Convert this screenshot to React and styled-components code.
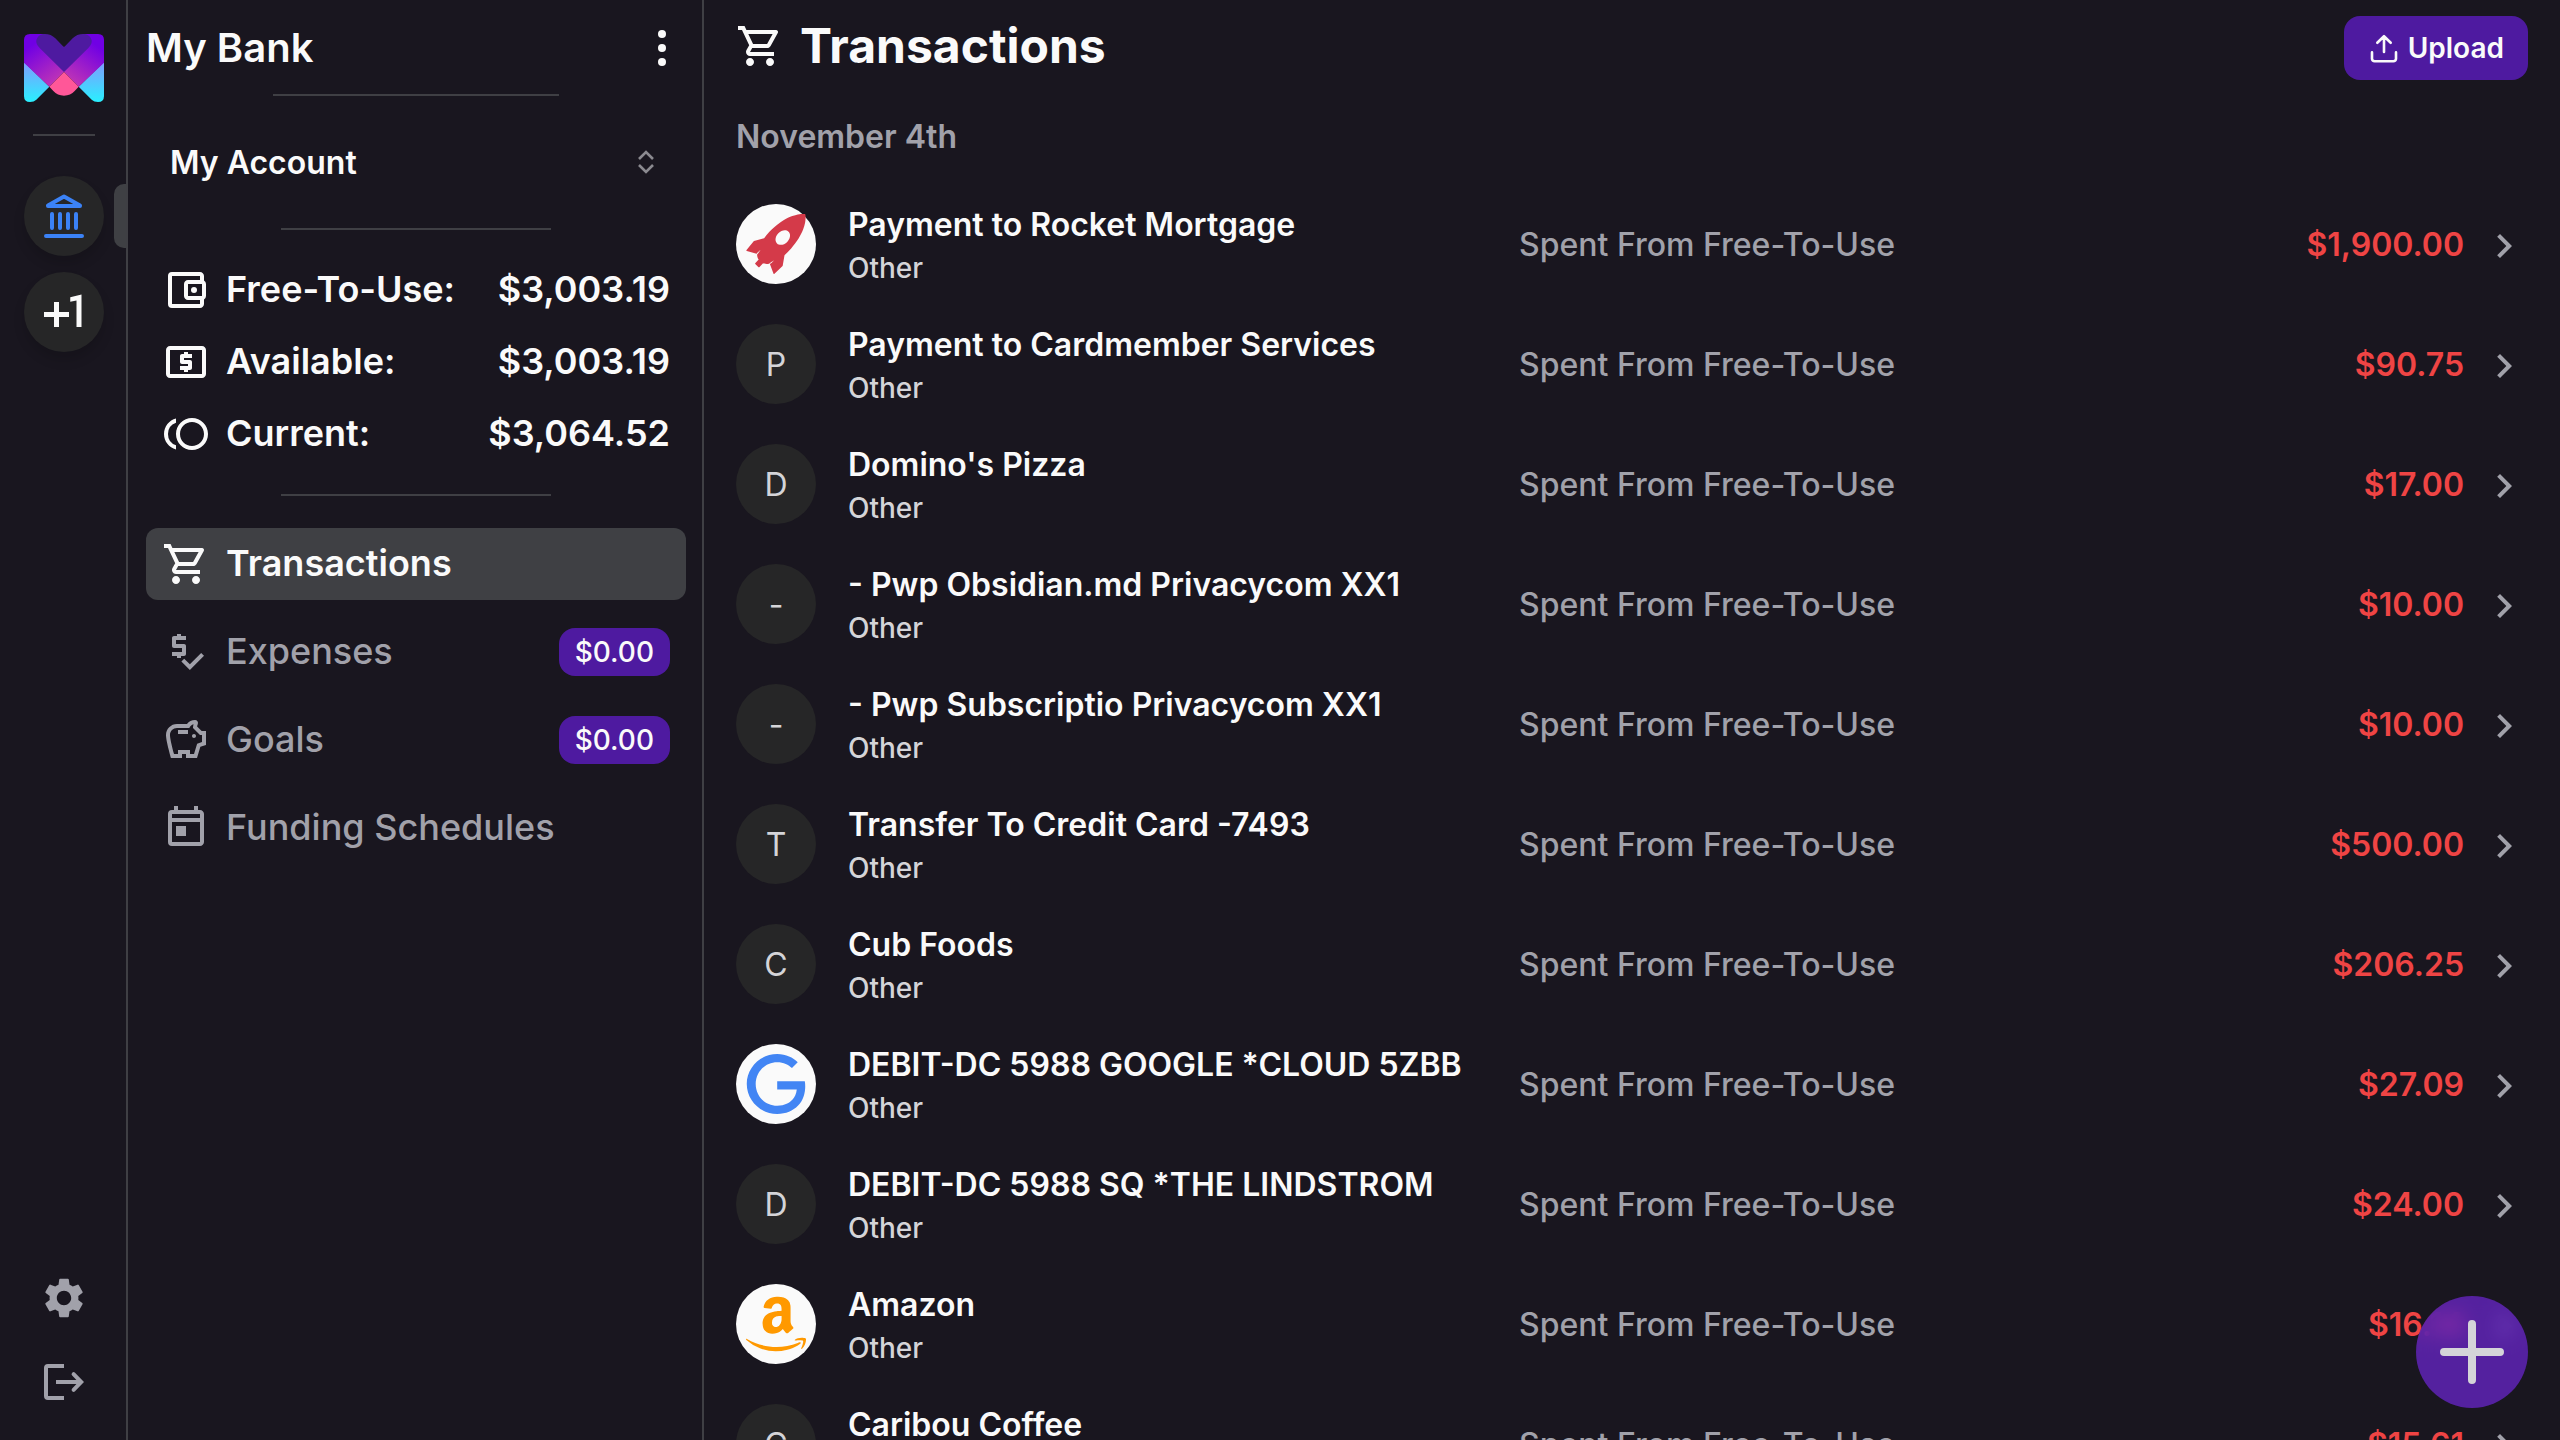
import React from "react";
import styled, { createGlobalStyle, css } from "styled-components";
import {
  MdKeyboardArrowRight,
  MdOutlineAccountBalanceWallet,
  MdOutlineLocalAtm,
  MdOutlineSavings,
  MdOutlineShoppingCart,
  MdOutlineToday,
  MdOutlineToll,
  MdPlusOne,
  MdPriceCheck,
  MdSettings,
} from "react-icons/md";
import { SiAmazon, SiGoogle, SiRocket } from "react-icons/si";

const color = {
  background: "#19161f",
  border: "#3f3f44",
  selected: "#3f4044",
  subtle: "#262627",
  purple: "#4e1aa0",
  bright: "#fafafa",
  content: "#d4d4d8",
  muted: "#a1a1aa",
  blue: "#3b82f6",
  red: "#ef4444",
};

const GlobalStyle = createGlobalStyle`
  *, *::before, *::after { box-sizing: border-box; }
  body {
    margin: 0;
    background: ${color.background};
    color: ${color.bright};
    font-family: Inter, "Liberation Sans", sans-serif;
  }
  button, select { font: inherit; color: inherit; border: 0; background: none; padding: 0; cursor: pointer; }
  a { color: inherit; text-decoration: none; }
  h1, h2, p, ul, dl, dd { margin: 0; padding: 0; }
  ul { list-style: none; }
  svg { display: block; flex: none; }
`;

const Layout = styled.div`
  display: flex;
  height: 100vh;
  overflow: hidden;
`;

/* Bank rail */

const Rail = styled.nav`
  flex: none;
  display: flex;
  flex-direction: column;
  align-items: center;
  width: 128px;
  padding: 34px 0 34px 2px;
  border-right: 2px solid ${color.border};
`;

const RailDivider = styled.hr`
  width: 62px;
  height: 2px;
  margin: 32px 0 40px;
  border: 0;
  background: ${color.border};
`;

const RailList = styled.ul`
  display: flex;
  flex-direction: column;
  gap: 16px;
  width: 100%;
  flex: 1;
`;

const RailItem = styled.li`
  position: relative;
  display: flex;
  justify-content: center;
  ${(p) =>
    p.$active &&
    css`
      &::after {
        content: "";
        position: absolute;
        right: 0;
        top: 8px;
        width: 12px;
        height: 64px;
        border-radius: 10px 0 0 10px;
        background: ${color.selected};
      }
    `}
`;

const RailButton = styled.button`
  display: grid;
  place-items: center;
  width: 80px;
  height: 80px;
  border-radius: 50%;
  background: ${color.subtle};
  box-shadow: 0 8px 12px rgba(0, 0, 0, 0.14);
`;

const RailFooter = styled.div`
  display: flex;
  flex-direction: column;
  gap: 36px;
  color: ${color.muted};
`;

/* Budgeting sidebar */

const Sidebar = styled.aside`
  flex: none;
  display: flex;
  flex-direction: column;
  align-items: stretch;
  width: 576px;
  padding: 0 16px 0 18px;
  border-right: 2px solid ${color.border};
`;

const SidebarHeader = styled.header`
  display: flex;
  align-items: center;
  justify-content: space-between;
  height: 94px;
  padding-top: 2px;
`;

const BankName = styled.h2`
  font-size: 40px;
  line-height: 48px;
  font-weight: 600;
`;

const MenuButton = styled.button`
  display: grid;
  place-items: center;
  width: 48px;
  height: 48px;
`;

const Divider = styled.hr`
  width: ${(p) => (p.$wide ? 286 : 270)}px;
  height: 2px;
  margin: 0 auto;
  border: 0;
  background: ${color.border};
`;

const AccountField = styled.div`
  display: grid;
  align-items: center;
  height: 132px;
  > * {
    grid-area: 1 / 1;
  }
  > svg {
    justify-self: end;
    margin-right: 32px;
    pointer-events: none;
  }
`;

const AccountSelect = styled.select`
  appearance: none;
  height: 72px;
  padding: 0 64px 0 24px;
  font-size: 32px;
  font-weight: 600;
`;

const Balances = styled.dl`
  padding: 24px 0;
`;

const Balance = styled.div`
  display: flex;
  align-items: center;
  gap: 16px;
  height: 72px;
  padding: 0 16px;
  font-size: 36px;
  line-height: 48px;
  font-weight: 600;
  dt,
  dd {
    padding-bottom: 2px;
  }
  dd {
    margin-left: auto;
  }
`;

const Menu = styled.ul`
  display: flex;
  flex-direction: column;
  gap: 16px;
  padding-top: 32px;
`;

const MenuLink = styled.a`
  display: flex;
  align-items: center;
  gap: 16px;
  height: 72px;
  padding: 0 16px;
  border-radius: 12px;
  font-size: 36px;
  line-height: 48px;
  font-weight: ${(p) => (p.$active ? 600 : 500)};
  color: ${(p) => (p.$active ? color.bright : color.muted)};
  background: ${(p) => (p.$active ? color.selected : "transparent")};
`;

const MenuLabel = styled.span`
  padding-bottom: 2px;
`;

const Badge = styled.span`
  margin-left: auto;
  padding: 0 16px;
  border-radius: 16px;
  background: ${color.purple};
  color: ${color.bright};
  font-size: 28px;
  line-height: 48px;
  font-weight: 500;
`;

/* Transactions */

const Main = styled.main`
  position: relative;
  flex: 1;
  min-width: 0;
  display: flex;
  flex-direction: column;
`;

const PageHeader = styled.header`
  flex: none;
  display: flex;
  align-items: center;
  justify-content: space-between;
  height: 96px;
  padding: 0 32px;
`;

const PageTitle = styled.h1`
  display: flex;
  align-items: center;
  gap: 16px;
  padding-bottom: 4px;
  font-size: 48px;
  line-height: 64px;
  font-weight: 700;
`;

const UploadButton = styled.button`
  display: flex;
  align-items: center;
  gap: 8px;
  height: 64px;
  padding: 0 24px;
  border-radius: 16px;
  background: ${color.purple};
  font-size: 28px;
  font-weight: 600;
`;

const Feed = styled.section`
  flex: 1;
  min-height: 0;
  padding: 0 32px;
  overflow-y: auto;
  scrollbar-width: none;
`;

const DateHeading = styled.h2`
  height: 88px;
  padding-top: 17px;
  font-size: 32px;
  line-height: 48px;
  font-weight: 600;
  color: ${color.muted};
`;

const TransactionLink = styled.a`
  display: grid;
  grid-template-columns: 1fr 1fr 162px 64px;
  align-items: center;
  height: 120px;
`;

const Merchant = styled.div`
  display: flex;
  align-items: center;
  gap: 32px;
  min-width: 0;
`;

const Avatar = styled.span`
  flex: none;
  display: grid;
  place-items: center;
  width: 80px;
  height: 80px;
  border-radius: 50%;
  font-size: 32px;
  color: ${(p) => p.$tint || color.content};
  background: ${(p) => (p.$tint ? color.bright : color.subtle)};
`;

const MerchantText = styled.div`
  padding-top: 2px;
`;

const MerchantName = styled.p`
  font-size: 32px;
  line-height: 46px;
  font-weight: 600;
  white-space: nowrap;
`;

const Category = styled.p`
  font-size: 28px;
  line-height: 40px;
  font-weight: 500;
  color: ${color.content};
`;

const SpentFrom = styled.span`
  padding-top: 2px;
  font-size: 32px;
  line-height: 48px;
  font-weight: 500;
  color: ${color.muted};
`;

const Amount = styled.span`
  justify-self: end;
  padding-top: 2px;
  font-size: 32px;
  line-height: 48px;
  font-weight: 600;
  color: ${color.red};
`;

const Chevron = styled(MdKeyboardArrowRight)`
  justify-self: end;
  margin-top: 4px;
  color: ${color.muted};
`;

const AddButton = styled.button`
  position: absolute;
  right: 32px;
  bottom: 32px;
  display: grid;
  place-items: center;
  width: 112px;
  height: 112px;
  border-radius: 50%;
  background: rgba(116, 40, 229, 0.65);
  backdrop-filter: blur(10px);
  color: ${color.content};
`;

/* Drawings */

const Logo = () => (
  <svg width="80" height="68" viewBox="0 0 240 204" role="img" aria-label="monetr">
    <defs>
      <linearGradient id="ribbonL" gradientUnits="userSpaceOnUse" x1="20" y1="15" x2="118" y2="150">
        <stop offset="0.1" stopColor="#7000e4" />
        <stop offset="1" stopColor="#c93bb0" />
      </linearGradient>
      <linearGradient id="ribbonR" gradientUnits="userSpaceOnUse" x1="220" y1="15" x2="122" y2="150">
        <stop offset="0.1" stopColor="#7000e4" />
        <stop offset="1" stopColor="#c93bb0" />
      </linearGradient>
      <linearGradient id="leg" gradientUnits="userSpaceOnUse" x1="0" y1="86" x2="0" y2="204">
        <stop offset="0" stopColor="#7f9cff" />
        <stop offset="1" stopColor="#29f0ff" />
      </linearGradient>
    </defs>
    <path fill="url(#leg)" d="M0 84 76 158 37 197Q30 204 18 204Q0 204 0 186Z" />
    <path fill="url(#leg)" d="M240 84 164 158 203 197Q210 204 222 204Q240 204 240 186Z" />
    <path fill="url(#ribbonL)" d="M18 0H62L120 40V114L76 158 0 86V18Q0 0 18 0Z" />
    <path fill="url(#ribbonR)" d="M222 0H178L120 40V114L164 158 240 86V18Q240 0 222 0Z" />
    <path
      fill="#4e1aa0"
      d="M120 114 47 42C38 33 36 26 37 19C40 7 49 0 62 0C76 0 85 4 94 13L120 40 146 13C155 4 164 0 178 0C191 0 200 7 203 19C204 26 202 33 193 42Z"
    />
    <path fill="#ff5798" d="M120 114 164 158 152 171C144 180 133 185 120 185C107 185 96 180 88 171L76 158Z" />
  </svg>
);

const BankIcon = () => (
  <svg width="48" height="48" viewBox="0 0 48 48" fill="none" stroke={color.blue} strokeWidth="4" strokeLinecap="round">
    <path strokeLinejoin="round" d="M24 4.5 40 13.5V14H8V13.5Z" />
    <path d="M12 22v14M20 22v14M28 22v14M36 22v14M6 44h36" />
  </svg>
);

const LogoutIcon = () => (
  <svg width="48" height="48" viewBox="0 0 24 24" fill="none" stroke="currentColor" strokeWidth="2">
    <path d="M12 4H4a1 1 0 0 0-1 1v14a1 1 0 0 0 1 1h8M8 12h12.5" />
    <path strokeLinecap="round" d="M16.8 8.1 20.6 12l-3.8 3.9" />
  </svg>
);

const MoreIcon = () => (
  <svg width="8" height="36" viewBox="0 0 8 36" fill="currentColor">
    <circle cx="4" cy="4" r="4" />
    <circle cx="4" cy="18" r="4" />
    <circle cx="4" cy="32" r="4" />
  </svg>
);

const SelectIcon = () => (
  <svg width="16" height="24" viewBox="0 0 16 24" fill="none" stroke="#8b8a90" strokeWidth="2.6">
    <path d="M1 9 8 2l7 7M1 15l7 7 7-7" />
  </svg>
);

const UploadIcon = () => (
  <svg
    width="32"
    height="32"
    viewBox="0 0 32 32"
    fill="none"
    stroke="currentColor"
    strokeWidth="2.6"
    strokeLinecap="round"
    strokeLinejoin="round"
  >
    <path d="M16 20V4.4M9.3 10.8 16 4.2l6.7 6.6M4 20.4v6.3a2.6 2.6 0 0 0 2.6 2.6h18.8a2.6 2.6 0 0 0 2.6-2.6v-6.3" />
  </svg>
);

const PlusIcon = () => (
  <svg width="64" height="64" viewBox="0 0 64 64" stroke="currentColor" strokeWidth="8" strokeLinecap="round">
    <path d="M32 4v56M4 32h56" />
  </svg>
);

/* Data */

const balances = [
  { label: "Free-To-Use:", value: "$3,003.19", icon: MdOutlineAccountBalanceWallet },
  { label: "Available:", value: "$3,003.19", icon: MdOutlineLocalAtm },
  { label: "Current:", value: "$3,064.52", icon: MdOutlineToll },
];

const menu = [
  { label: "Transactions", icon: MdOutlineShoppingCart, active: true },
  { label: "Expenses", icon: MdPriceCheck, badge: "$0.00" },
  { label: "Goals", icon: MdOutlineSavings, badge: "$0.00" },
  { label: "Funding Schedules", icon: MdOutlineToday },
];

const transactions = [
  { name: "Payment to Rocket Mortgage", amount: "$1,900.00", logo: SiRocket, tint: "#d43a49" },
  { name: "Payment to Cardmember Services", amount: "$90.75" },
  { name: "Domino's Pizza", amount: "$17.00" },
  { name: "- Pwp Obsidian.md Privacycom XX1", amount: "$10.00" },
  { name: "- Pwp Subscriptio Privacycom XX1", amount: "$10.00" },
  { name: "Transfer To Credit Card -7493", amount: "$500.00" },
  { name: "Cub Foods", amount: "$206.25" },
  { name: "DEBIT-DC 5988 GOOGLE *CLOUD 5ZBB", amount: "$27.09", logo: SiGoogle, tint: "#4285f4" },
  { name: "DEBIT-DC 5988 SQ *THE LINDSTROM", amount: "$24.00" },
  { name: "Amazon", amount: "$16.14", logo: SiAmazon, tint: "#ff9900" },
  { name: "Caribou Coffee", amount: "$15.61" },
];

function Transaction({ name, amount, logo: BrandLogo, tint }) {
  return (
    <li>
      <TransactionLink href="#">
        <Merchant>
          <Avatar $tint={tint}>{BrandLogo ? <BrandLogo size={60} /> : name[0]}</Avatar>
          <MerchantText>
            <MerchantName>{name}</MerchantName>
            <Category>Other</Category>
          </MerchantText>
        </Merchant>
        <SpentFrom>Spent From Free-To-Use</SpentFrom>
        <Amount>{amount}</Amount>
        <Chevron size={48} />
      </TransactionLink>
    </li>
  );
}

export default function App() {
  return (
    <>
      <GlobalStyle />
      <Layout>
        <Rail aria-label="Banks">
          <Logo />
          <RailDivider />
          <RailList>
            <RailItem $active>
              <RailButton aria-label="My Bank">
                <BankIcon />
              </RailButton>
            </RailItem>
            <RailItem>
              <RailButton aria-label="Add a bank">
                <MdPlusOne size={60} />
              </RailButton>
            </RailItem>
          </RailList>
          <RailFooter>
            <a href="#" aria-label="Settings">
              <MdSettings size={48} />
            </a>
            <a href="#" aria-label="Log out">
              <LogoutIcon />
            </a>
          </RailFooter>
        </Rail>

        <Sidebar>
          <SidebarHeader>
            <BankName>My Bank</BankName>
            <MenuButton aria-label="Bank options">
              <MoreIcon />
            </MenuButton>
          </SidebarHeader>
          <Divider $wide />
          <AccountField>
            <AccountSelect aria-label="Account" defaultValue="checking">
              <option value="checking">My Account</option>
            </AccountSelect>
            <SelectIcon />
          </AccountField>
          <Divider />
          <Balances>
            {balances.map(({ label, value, icon: Icon }) => (
              <Balance key={label}>
                <Icon size={48} />
                <dt>{label}</dt>
                <dd>{value}</dd>
              </Balance>
            ))}
          </Balances>
          <Divider />
          <Menu>
            {menu.map(({ label, icon: Icon, badge, active }) => (
              <li key={label}>
                <MenuLink href="#" $active={active}>
                  <Icon size={48} />
                  <MenuLabel>{label}</MenuLabel>
                  {badge && <Badge>{badge}</Badge>}
                </MenuLink>
              </li>
            ))}
          </Menu>
        </Sidebar>

        <Main>
          <PageHeader>
            <PageTitle>
              <MdOutlineShoppingCart size={48} />
              Transactions
            </PageTitle>
            <UploadButton>
              <UploadIcon />
              Upload
            </UploadButton>
          </PageHeader>
          <Feed>
            <DateHeading>November 4th</DateHeading>
            <ul>
              {transactions.map((t) => (
                <Transaction key={t.name} {...t} />
              ))}
            </ul>
          </Feed>
          <AddButton aria-label="Add transaction">
            <PlusIcon />
          </AddButton>
        </Main>
      </Layout>
    </>
  );
}
